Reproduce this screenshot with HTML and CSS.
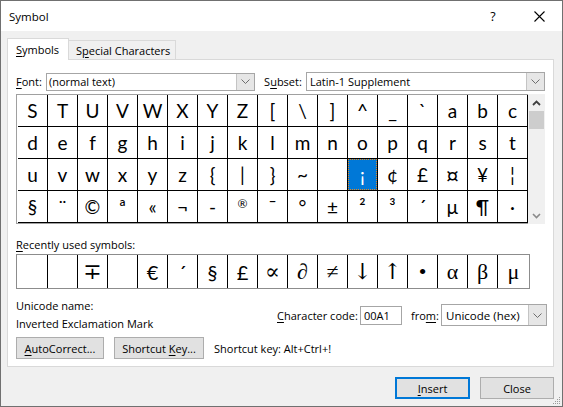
FILE: index.html
```html
<!DOCTYPE html>
<html>
<head>
<meta charset="utf-8">
<link rel="stylesheet" href="styles.css">
</head>
<body>
<div class="window">
  <div class="titlebar">
    <span class="title">Symbol</span>
    <span class="tb-btn help">?</span>
    <span class="tb-btn close"><svg width="11" height="11" viewBox="0 0 11 11"><path d="M0.5 0.5 L10.5 10.5 M10.5 0.5 L0.5 10.5" stroke="#000" stroke-width="1.1" fill="none"/></svg></span>
  </div>
  <div class="client">
    <div class="tabs">
      <div class="tab active"><span><u>S</u>ymbols</span></div>
      <div class="tab"><span>S<u>p</u>ecial Characters</span></div>
    </div>
    <div class="panel">
      <div class="selects">
        <span class="lbl font-lbl"><u>F</u>ont:</span>
        <div class="combo font-combo"><span class="combo-text">(normal text)</span><span class="drop"><svg width="9" height="5" viewBox="0 0 9 5"><polyline points="0.5,0.5 4.5,4.5 8.5,0.5" fill="none" stroke="#6d6d6d" stroke-width="1"/></svg></span></div>
        <span class="lbl subset-lbl">S<u>u</u>bset:</span>
        <div class="combo subset-combo"><span class="combo-text">Latin-1 Supplement</span><span class="drop"><svg width="9" height="5" viewBox="0 0 9 5"><polyline points="0.5,0.5 4.5,4.5 8.5,0.5" fill="none" stroke="#6d6d6d" stroke-width="1"/></svg></span></div>
      </div>
      <div class="grid-wrap">
        <div class="grid">
          <span>S</span><span>T</span><span>U</span><span>V</span><span>W</span><span>X</span><span>Y</span><span>Z</span><span>[</span><span>\</span><span>]</span><span>^</span><span>_</span><span>`</span><span>a</span><span>b</span><span>c</span>
          <span>d</span><span>e</span><span>f</span><span>g</span><span>h</span><span>i</span><span>j</span><span>k</span><span>l</span><span>m</span><span>n</span><span>o</span><span>p</span><span>q</span><span>r</span><span>s</span><span>t</span>
          <span>u</span><span>v</span><span>w</span><span>x</span><span>y</span><span>z</span><span>{</span><span>|</span><span>}</span><span>~</span><span>&nbsp;</span><span class="sel">¡</span><span>¢</span><span>£</span><span class="big">¤</span><span>¥</span><span>¦</span>
          <span>§</span><span>¨</span><span>©</span><span>ª</span><span>«</span><span>¬</span><span>-</span><span class="reg">®</span><span>¯</span><span>°</span><span>±</span><span>²</span><span>³</span><span>´</span><span>µ</span><span>¶</span><span>·</span>
        </div>
        <div class="scrollbar">
          <div class="sb-btn"><svg width="9" height="6" viewBox="0 0 9 6"><polyline points="1,5 4.5,1.5 8,5" fill="none" stroke="#404040" stroke-width="1.8"/></svg></div>
          <div class="sb-thumb"></div>
          <div class="sb-track"></div>
          <div class="sb-btn"><svg width="9" height="6" viewBox="0 0 9 6"><polyline points="1,1 4.5,4.5 8,1" fill="none" stroke="#8a8a8a" stroke-width="1.6"/></svg></div>
        </div>
      </div>
      <div class="recent-lbl"><u>R</u>ecently used symbols:</div>
      <div class="recent">
        <span></span><span></span><span class="s">∓</span><span></span><span>€</span><span>´</span><span>§</span><span>£</span><span class="s">∝</span><span class="s">∂</span><span class="s">≠</span><span class="arrow">↓&#xFE0E;</span><span class="arrow">↑&#xFE0E;</span><span class="s">•</span><span class="s">α</span><span class="s">β</span><span class="s">μ</span>
      </div>
      <div class="info">
        <div class="uname">
          <div>Unicode name:</div>
          <div>Inverted Exclamation Mark</div>
        </div>
        <div class="code">
          <span class="lbl code-lbl"><u>C</u>haracter code:</span>
          <div class="input">00A1</div>
          <span class="lbl from-lbl">fro<u>m</u>:</span>
          <div class="combo from-combo"><span class="combo-text">Unicode (hex)</span><span class="drop"><svg width="9" height="5" viewBox="0 0 9 5"><polyline points="0.5,0.5 4.5,4.5 8.5,0.5" fill="none" stroke="#6d6d6d" stroke-width="1"/></svg></span></div>
        </div>
      </div>
      <div class="actions">
        <div class="btn autocorrect"><span><u>A</u>utoCorrect...</span></div>
        <div class="btn shortcut"><span>Shortcut <u>K</u>ey...</span></div>
        <span class="sk">Shortcut key: Alt+Ctrl+!</span>
      </div>
    </div>
    <div class="footer">
      <div class="btn insert"><span><u>I</u>nsert</span></div>
      <div class="btn closebtn"><span>Close</span></div>
    </div>
  </div>
  <svg class="grip" width="8" height="8" viewBox="0 0 8 8">
    <rect x="6" y="0" width="1" height="1" fill="#9a9a9a"/>
    <rect x="4" y="2" width="1" height="1" fill="#9a9a9a"/>
    <rect x="6" y="2" width="1" height="1" fill="#9a9a9a"/>
    <rect x="2" y="4" width="1" height="1" fill="#9a9a9a"/>
    <rect x="4" y="4" width="1" height="1" fill="#9a9a9a"/>
    <rect x="6" y="4" width="1" height="1" fill="#9a9a9a"/>
    <rect x="0" y="6" width="1" height="1" fill="#9a9a9a"/>
    <rect x="2" y="6" width="1" height="1" fill="#9a9a9a"/>
    <rect x="4" y="6" width="1" height="1" fill="#9a9a9a"/>
    <rect x="6" y="6" width="1" height="1" fill="#9a9a9a"/>
  </svg>
</div>
</body>
</html>
```
FILE: styles.css
```css
html, body { margin: 0; padding: 0; }
body { background: #f0f0f0; }
u { text-decoration: underline; text-underline-offset: 2px; text-decoration-thickness: 1px; }

.window {
  width: 563px; height: 407px; box-sizing: border-box;
  border: 1px solid #707070; background: #f0f0f0;
  font-family: "Segoe UI", "Open Sans", "Noto Sans", sans-serif;
  font-size: 11px; color: #000; position: relative; overflow: hidden;
}
.titlebar { height: 30px; background: #fff; display: flex; align-items: center; }
.title { flex: 1; padding-left: 8px; font-size: 11.5px; }
.tb-btn { width: 46px; height: 30px; display: flex; align-items: center; justify-content: center; }
.help { font-size: 12.5px; }

.client { padding: 7px 8px 0 6px; }
.tabs { display: flex; align-items: flex-end; height: 21px; position: relative; z-index: 1; }
.tab {
  box-sizing: border-box; height: 19px; border: 1px solid #d9d9d9; border-bottom: none;
  background: #f0f0f0; padding: 0 7px; display: flex; align-items: center;
  width: 108px; margin-left: -1px; white-space: nowrap;
}
.tab.active { background: #fff; height: 22px; width: 62px; margin-left: 0; margin-bottom: -1px; padding-left: 8px; }

.panel {
  box-sizing: border-box; height: 308px; background: #fff; border: 1px solid #d9d9d9;
  padding: 0 8px;
}
.selects { display: flex; align-items: center; margin-top: 12px; height: 19px; }
.lbl { white-space: nowrap; }
.font-lbl { width: 30px; }
.subset-lbl { width: 42px; margin-left: 9px; }
.combo {
  box-sizing: border-box; border: 1px solid #a6a6a6; background: #fff;
  display: flex; align-items: stretch; height: 18px;
}
.combo-text { flex: 1; padding-left: 2px; display: flex; align-items: center; white-space: nowrap; }
.drop {
  width: 17px; background: #e6e6e6; border-left: 1px solid #c4c4c4;
  display: flex; align-items: center; justify-content: center;
}
.font-combo { width: 210px; }
.subset-combo { width: 240px; height: 19px; padding-left: 1px; }

.grid-wrap { display: flex; margin-top: 3px; height: 130px; }
.grid {
  box-sizing: border-box; border: 1px solid #a0a0a0; border-right: none; padding-left: 1px;
  display: grid; grid-template-columns: repeat(17, 30px); grid-template-rows: repeat(4, 32px);
  font-family: "Lato", "Open Sans", sans-serif; font-size: 19px;
}
.grid span {
  box-sizing: border-box; border-right: 1px solid #000; border-bottom: 1px solid #000;
  display: flex; align-items: center; justify-content: center; line-height: 1; position: relative;
}
.grid .reg { font-size: 12px; align-items: flex-start; padding-top: 7px; }
.grid .big { font-size: 24px; }
.grid .sel { background: #0078d7; color: #fff; }
.grid .sel::after {
  content: ""; position: absolute; inset: 0; border: 1px dotted #e8891e;
}
.scrollbar { width: 17px; height: 130px; background: #f0f0f0; display: flex; flex-direction: column; }
.sb-btn { height: 17px; display: flex; align-items: center; justify-content: center; }
.sb-thumb { height: 18px; background: #cdcdcd; margin: 0 1px; }
.sb-track { flex: 1; }

.recent-lbl { margin-top: 13px; height: 16px; line-height: 16px; }
.recent {
  margin-top: 1px; box-sizing: border-box; width: 514px; height: 35px;
  border: 1px solid #8c8c8c; display: flex;
  font-family: "Lato", "Open Sans", sans-serif; font-size: 20px;
}
.recent span {
  box-sizing: border-box; width: 30px; border-right: 1px solid #000;
  display: flex; align-items: center; justify-content: center; line-height: 1;
}
.recent span:first-child { width: 31px; }
.recent span:last-child { width: 31px; border-right: none; }
.recent .s { font-family: "Liberation Serif", "DejaVu Serif", serif; font-size: 22px; }
.recent .arrow { font-family: "DejaVu Serif", serif; font-size: 22px; color: #000; font-variant-emoji: text; }

.info { display: flex; justify-content: space-between; align-items: center; margin-top: 8px; }
.uname div { line-height: 18px; height: 18px; }
.code { display: flex; align-items: center; margin-right: -2px; }
.code .code-lbl { width: 83px; }
.input {
  box-sizing: border-box; width: 42px; height: 19px; border: 1px solid #a6a6a6;
  padding-left: 3px; display: flex; align-items: center;
}
.code .from-lbl { width: 30px; margin-left: 9px; }
.from-combo { width: 106px; height: 22px; }
.from-combo .combo-text { padding-left: 4px; font-size: 11.5px; }

.actions { display: flex; align-items: center; margin-top: 4px; }
.btn {
  box-sizing: border-box; height: 22px; background: #e1e1e1; border: 1px solid #adadad;
  display: flex; align-items: center; justify-content: center; white-space: nowrap;
}
.autocorrect { width: 88px; }
.shortcut { width: 90px; margin-left: 10px; }
.sk { margin-left: 10px; }

.footer { display: flex; justify-content: flex-end; margin-top: 10px; }
.insert { width: 75px; border: 2px solid #0078d7; }
.closebtn { width: 74px; margin-left: 10px; }

.grip { position: absolute; right: 1px; bottom: 1px; }
```
